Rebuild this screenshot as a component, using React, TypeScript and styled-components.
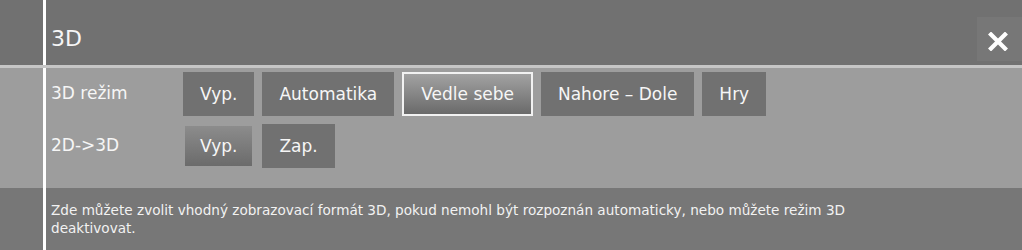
import React from "react";
import styled, { createGlobalStyle } from "styled-components";

const Global = createGlobalStyle`
  html, body { margin: 0; padding: 0; height: 100%; }
  body {
    background: #777777;
    font-family: "DejaVu Sans", "Liberation Sans", sans-serif;
    color: #f4f4f4;
  }
  #root { height: 100%; }
`;

const Page = styled.div`
  height: 100vh;
  display: flex;
  flex-direction: column;
`;

const Band = styled.div<{ $bg: string; $h?: number; $grow?: boolean }>`
  display: grid;
  grid-template-columns: 43px 1fr;
  background: ${(p) => p.$bg};
  ${(p) => (p.$h ? `height: ${p.$h}px;` : "")}
  ${(p) => (p.$grow ? "flex: 1;" : "")}
`;

const Main = styled.div`
  border-left: 3px solid #ffffff;
  padding-left: 5px;
  min-width: 0;
`;

const HeaderMain = styled(Main)`
  display: flex;
  justify-content: space-between;
  align-items: flex-start;
`;

const Title = styled.h1`
  margin: 28px 0 0;
  font-size: 22px;
  line-height: 22px;
  font-weight: normal;
  color: #f6f6f6;
`;

const CloseButton = styled.button`
  margin-top: 17px;
  width: 45px;
  height: 44px;
  border: none;
  padding: 0;
  background: #777777;
  display: flex;
  align-items: center;
  justify-content: center;
  cursor: pointer;
  svg { margin: 5px 4px 0 0; }
`;

const Separator = styled.div`
  height: 3px;
  background: #c6c6c6;
`;

const BodyMain = styled(Main)`
  padding-top: 4px;
  display: flex;
  flex-direction: column;
  gap: 8px;
`;

const OptionRow = styled.div`
  display: flex;
  align-items: center;
`;

const Label = styled.div`
  width: 132px;
  font-size: 17px;
  margin-top: -3px;
  color: #f6f6f6;
`;

const Choices = styled.div`
  display: flex;
  gap: 8px;
`;

type ChoiceState = "normal" | "active" | "focused";

const Choice = styled.button<{ $state: ChoiceState }>`
  height: 44px;
  font-family: "DejaVu Sans", "Liberation Sans", sans-serif;
  font-size: 17px;
  color: #f6f6f6;
  cursor: pointer;
  padding: ${(p) => (p.$state === "focused" ? "0 17px" : p.$state === "active" ? "0 15px" : "0 17px")};
  border: ${(p) =>
    p.$state === "focused"
      ? "2px solid #f2f2f2"
      : p.$state === "active"
      ? "2px solid transparent"
      : "0"};
  background: ${(p) =>
    p.$state === "focused"
      ? "linear-gradient(#a2a2a2, #6a6a6a)"
      : p.$state === "active"
      ? "linear-gradient(#8c8c8c, #6b6b6b) padding-box"
      : "#717171"};
`;

const FooterMain = styled(Main)`
  padding-top: 13px;
`;

const Help = styled.p`
  margin: 0;
  max-width: 880px;
  font-size: 13.6px;
  line-height: 18px;
  color: #f2f2f2;
`;

const CloseIcon = () => (
  <svg width="20" height="19" viewBox="0 0 20 19" aria-hidden="true">
    <path
      d="M3 2.5 L17 16.5 M17 2.5 L3 16.5"
      stroke="#ffffff"
      strokeWidth="4.2"
      strokeLinecap="square"
      fill="none"
    />
  </svg>
);

type Opt = { label: string; state: ChoiceState };

const modes: Opt[] = [
  { label: "Vyp.", state: "normal" },
  { label: "Automatika", state: "normal" },
  { label: "Vedle sebe", state: "focused" },
  { label: "Nahore – Dole", state: "normal" },
  { label: "Hry", state: "normal" },
];

const conv: Opt[] = [
  { label: "Vyp.", state: "active" },
  { label: "Zap.", state: "normal" },
];

export default function App() {
  return (
    <Page>
      <Global />
      <Band $bg="#717171" $h={65}>
        <div />
        <HeaderMain>
          <Title>3D</Title>
          <CloseButton aria-label="Zavřít">
            <CloseIcon />
          </CloseButton>
        </HeaderMain>
      </Band>
      <Separator />
      <Band $bg="#9d9d9d" $h={120}>
        <div />
        <BodyMain>
          <OptionRow>
            <Label>3D režim</Label>
            <Choices>
              {modes.map((m) => (
                <Choice key={m.label} $state={m.state}>
                  {m.label}
                </Choice>
              ))}
            </Choices>
          </OptionRow>
          <OptionRow>
            <Label>2D-&gt;3D</Label>
            <Choices>
              {conv.map((m) => (
                <Choice key={m.label} $state={m.state}>
                  {m.label}
                </Choice>
              ))}
            </Choices>
          </OptionRow>
        </BodyMain>
      </Band>
      <Band $bg="#777777" $grow>
        <div />
        <FooterMain>
          <Help>
            Zde můžete zvolit vhodný zobrazovací formát 3D, pokud nemohl být
            rozpoznán automaticky, nebo můžete režim 3D deaktivovat.
          </Help>
        </FooterMain>
      </Band>
    </Page>
  );
}
